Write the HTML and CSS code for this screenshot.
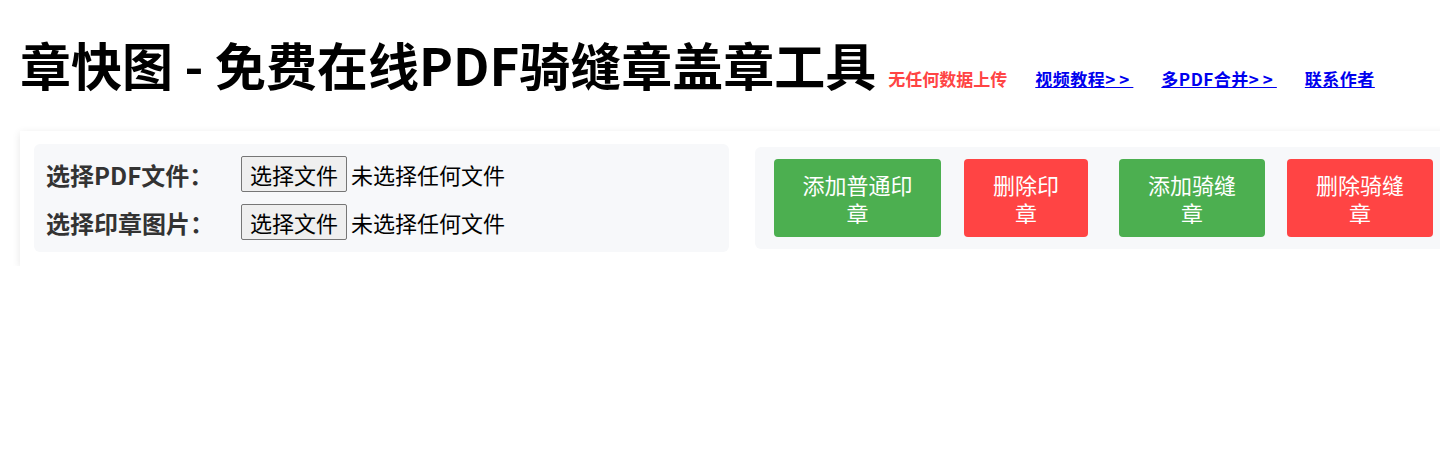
FILE: index.html
```html
<!DOCTYPE html>
<html lang="zh-CN">
<head>
  <meta charset="UTF-8">
  <meta name="viewport" content="width=device-width, initial-scale=1.0">
  <title>章快图 - 免费在线PDF骑缝章盖章工具</title>
  <link rel="stylesheet" href="styles.css">
</head>
<body>
  <div class="page">
    <h1 class="title">章快图 - 免费在线PDF骑缝章盖章工具<span class="note">无任何数据上传</span><a href="#" class="nav-link">视频教程<span class="arrows">&gt;&gt;</span></a><a href="#" class="nav-link">多PDF合并<span class="arrows">&gt;&gt;</span></a><a href="#" class="nav-link">联系作者</a></h1>

    <div class="toolbar">
      <div class="file-panel">
        <div class="file-row">
          <span class="file-label">选择PDF文件：</span>
          <button class="file-btn" type="button">选择文件</button>
          <span class="file-name">未选择任何文件</span>
        </div>
        <div class="file-row">
          <span class="file-label">选择印章图片：</span>
          <button class="file-btn" type="button">选择文件</button>
          <span class="file-name">未选择任何文件</span>
        </div>
      </div>

      <div class="action-panel">
        <button class="btn btn-add btn-w1" type="button">添加普通印章</button>
        <button class="btn btn-del btn-w2" type="button">删除印章</button>
        <button class="btn btn-add btn-w3" type="button">添加骑缝章</button>
        <button class="btn btn-del btn-w3" type="button">删除骑缝章</button>
      </div>
    </div>
  </div>
</body>
</html>
```

FILE: styles.css
```css
body{
  margin: 0;
  background: #fff;
  font-family: "Noto Sans CJK SC", "Noto Sans", sans-serif;
  overflow-x: hidden;
}
.page{
  padding: 0 20px;
}
.title{
  margin: 24px 0 12px 0;
  font-size: 51px;
  font-weight: 700;
  color: #000;
  line-height: 80px;
  white-space: nowrap;
}
.note{
  margin-left: 12px;
  font-size: 17px;
  color: #ff4444;
}
.nav-link{
  margin-left: 28px;
  font-size: 17px;
  color: #0000ee;
  text-decoration: underline;
  letter-spacing: 0.5px;
}
.arrows{
  letter-spacing: 4px;
}

.toolbar{
  display: flex;
  align-items: center;
  gap: 26px;
  width: max-content;
  padding: 13px 14px 14px 14px;
  background: #fff;
  box-shadow: 0 2px 8px rgba(0, 0, 0, 0.1);
}
.file-panel{
  width: 671px;
  padding: 12px;
  background: #f7f8fa;
  border-radius: 6px;
  display: flex;
  flex-direction: column;
  gap: 12px;
}
.file-row{
  display: flex;
  align-items: center;
}
.file-label{
  width: 195px;
  font-size: 24px;
  font-weight: 700;
  color: #333;
}
.file-btn{
  height: 36px;
  padding: 0 8px;
  font-family: inherit;
  font-size: 22px;
  line-height: 34px;
  color: #000;
  background: #efefef;
  border: 1px solid #767676;
  border-radius: 2px;
}
.file-name{
  margin-left: 4px;
  font-size: 22px;
  color: #000;
}

.action-panel{
  display: flex;
  align-items: center;
  padding: 12px 19px;
  background: #f7f8fa;
  border-radius: 6px;
}
.btn{
  height: 78px;
  padding: 0 24px;
  border: none;
  border-radius: 4px;
  font-family: inherit;
  font-size: 22px;
  line-height: 28px;
  color: #fff;
}
.btn-add{
  background: #4caf50;
}
.btn-del{
  background: #ff4444;
}
.btn-w1{
  width: 167px;
}
.btn-w2{
  width: 124px;
  margin-left: 23px;
}
.btn-w3{
  width: 146px;
}
.btn-add.btn-w3{
  margin-left: 31px;
}
.btn-del.btn-w3{
  margin-left: 22px;
}
```
